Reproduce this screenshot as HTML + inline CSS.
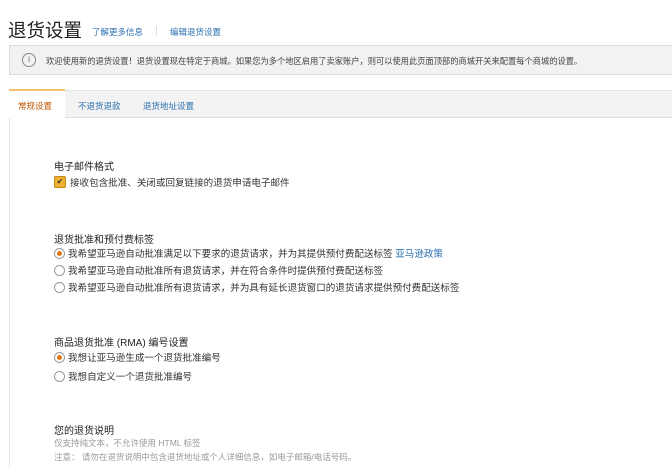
<!DOCTYPE html>
<html><head><meta charset="utf-8"><style>
body{margin:0;width:672px;height:467px;overflow:hidden;background:#fff;font-family:"Liberation Sans","Noto Sans CJK SC",sans-serif;color:#333;position:relative}
.a{position:absolute;white-space:nowrap}
.s{font-size:9px}
.r{font-size:9.55px}
.h{font-size:10px;color:#222}
.lnk{color:#2a6fb0}
.rad{position:absolute;width:9px;height:9px;border:1px solid #999;border-radius:50%;background:#fff}
.rad.on::after{content:"";position:absolute;left:2px;top:2px;width:5px;height:5px;border-radius:50%;background:#e47911}
</style></head><body>
<div class="a" style="left:8px;top:17px;font-size:18.5px;color:#222">退货设置</div>
<div class="a s lnk" style="left:92px;top:26px;font-size:8.5px">了解更多信息</div>
<div class="a" style="left:156px;top:26px;width:1px;height:10px;background:#ddd"></div>
<div class="a s lnk" style="left:170px;top:26px;font-size:8.5px">编辑退货设置</div>
<div class="a" style="left:9px;top:45px;width:663px;height:30px;background:#f2f2f2;border:1px solid #ddd;border-right:none;box-sizing:border-box"></div>
<div class="a" style="left:22px;top:53px;width:12px;height:12px;border:1px solid #888;border-radius:50%;font-size:8px;text-align:center;line-height:12px;color:#666">i</div>
<div class="a" style="left:46px;top:55px;color:#444;font-size:8.25px">欢迎使用新的退货设置！退货设置现在特定于商城。如果您为多个地区启用了卖家账户，则可以使用此页面顶部的商城开关来配置每个商城的设置。</div>
<div class="a" style="left:9px;top:90px;width:663px;height:28px;background:#f3f3f3;border-top:1px solid #e4e4e4;border-bottom:1px solid #ddd;box-sizing:border-box"></div>
<div class="a" style="left:9px;top:89px;width:56px;height:30px;background:#fff;border-top:2px solid #f0c070;box-sizing:border-box"></div>
<div class="a" style="left:18px;top:100px;color:#c45500;font-size:8.5px">常规设置</div>
<div class="a lnk" style="left:78px;top:100px;font-size:8.5px">不退货退款</div>
<div class="a lnk" style="left:143px;top:100px;font-size:8.5px">退货地址设置</div>
<div class="a" style="left:9px;top:118px;width:1px;height:349px;background:#e4e4e4"></div>

<div class="a h" style="left:54px;top:158px">电子邮件格式</div>
<div class="a" style="left:54px;top:176px;width:10px;height:10px;background:#f0b030;border:1px solid #c08a10;border-radius:2px;color:#333;font-size:8px;line-height:10px;text-align:center">✔</div>
<div class="a r" style="left:70px;top:175px">接收包含批准、关闭或回复链接的退货申请电子邮件</div>

<div class="a h" style="left:54px;top:231px">退货批准和预付费标签</div>
<div class="rad on" style="left:54px;top:248px"></div>
<div class="a r" style="left:68px;top:246px">我希望亚马逊自动批准满足以下要求的退货请求，并为其提供预付费配送标签 <span class="lnk">亚马逊政策</span></div>
<div class="rad" style="left:54px;top:265px"></div>
<div class="a r" style="left:68px;top:263px">我希望亚马逊自动批准所有退货请求，并在符合条件时提供预付费配送标签</div>
<div class="rad" style="left:54px;top:282px"></div>
<div class="a r" style="left:68px;top:280px">我希望亚马逊自动批准所有退货请求，并为具有延长退货窗口的退货请求提供预付费配送标签</div>

<div class="a h" style="left:54px;top:334px">商品退货批准 (RMA) 编号设置</div>
<div class="rad on" style="left:54px;top:352px"></div>
<div class="a r" style="left:68px;top:350px">我想让亚马逊生成一个退货批准编号</div>
<div class="rad" style="left:54px;top:371px"></div>
<div class="a r" style="left:68px;top:369px">我想自定义一个退货批准编号</div>

<div class="a h" style="left:54px;top:422px">您的退货说明</div>
<div class="a" style="left:54px;top:437px;font-size:8.5px;color:#999">仅支持纯文本，不允许使用 HTML 标签</div>
<div class="a" style="left:54px;top:451px;font-size:8.5px;color:#999">注意： 请勿在退货说明中包含退货地址或个人详细信息，如电子邮箱/电话号码。</div>
</body></html>
